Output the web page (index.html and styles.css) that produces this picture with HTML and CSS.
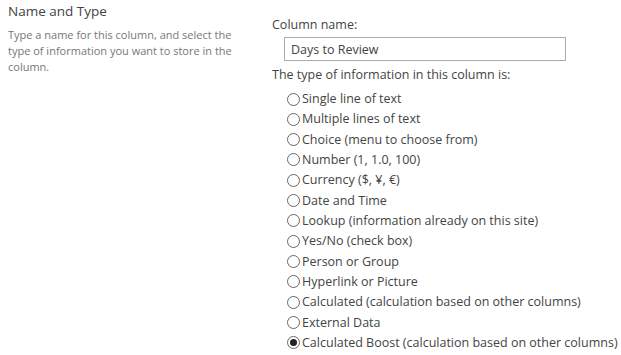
FILE: index.html
```html
<!DOCTYPE html>
<html lang="en">
<head>
  <meta charset="UTF-8" />
  <title>Name and Type</title>
  <link rel="stylesheet" href="styles.css">
</head>
<body>

  <div class="section">
    <div class="section-info">
      <h3 class="section-title">Name and Type</h3>
      <p class="section-desc">Type a name for this column, and select the type of information you want to store in the column.</p>
    </div>

    <div class="section-body">
      <label class="field-label" for="col-name">Column name:</label>
      <input id="col-name" class="text-input" type="text" value="Days to Review">

      <div class="field-label">The type of information in this column is:</div>
      <ul class="type-list">
        <li><label><input type="radio" name="type"><span class="radio"></span>Single line of text</label></li>
        <li><label><input type="radio" name="type"><span class="radio"></span>Multiple lines of text</label></li>
        <li><label><input type="radio" name="type"><span class="radio"></span>Choice (menu to choose from)</label></li>
        <li><label><input type="radio" name="type"><span class="radio"></span>Number (1, 1.0, 100)</label></li>
        <li><label><input type="radio" name="type"><span class="radio"></span>Currency ($, ¥, €)</label></li>
        <li><label><input type="radio" name="type"><span class="radio"></span>Date and Time</label></li>
        <li><label><input type="radio" name="type"><span class="radio"></span>Lookup (information already on this site)</label></li>
        <li><label><input type="radio" name="type"><span class="radio"></span>Yes/No (check box)</label></li>
        <li><label><input type="radio" name="type"><span class="radio"></span>Person or Group</label></li>
        <li><label><input type="radio" name="type"><span class="radio"></span>Hyperlink or Picture</label></li>
        <li><label><input type="radio" name="type"><span class="radio"></span>Calculated (calculation based on other columns)</label></li>
        <li><label><input type="radio" name="type"><span class="radio"></span>External Data</label></li>
        <li><label><input type="radio" name="type" checked><span class="radio"></span>Calculated Boost (calculation based on other columns)</label></li>
      </ul>
    </div>
  </div>

</body>
</html>
```

FILE: styles.css
```css
body {
  margin: 0;
  background: #fff;
  font-family: "Open Sans", "Noto Sans", sans-serif;
  color: #444;
}
.section {
  display: flex;
}
.section-info {
  width: 240px;
  padding: 2px 0 0 8px;
}
.section-title {
  margin: 0;
  font-size: 13.5px; font-weight: normal; line-height: 18px;
  color: #444;
}
.section-desc {
  margin: 7px 0 0;
  font-size: 11px; line-height: 16px;
  color: #777;
}
.section-body {
  margin-left: 24px;
  padding-top: 16px;
}
.field-label {
  display: block;
  font-size: 12.5px; line-height: 18px;
  color: #444;
}
.text-input {
  display: block;
  margin: 3px 0 5px 12px;
  width: 282px; height: 24px;
  box-sizing: border-box;
  border: 1px solid #ababab;
  padding: 0 6px;
  font-family: inherit; font-size: 12.5px;
  color: #444;
}
.type-list {
  list-style: none;
  margin: 5px 0 0 15px; padding: 0;
}
.type-list li {
  height: 20.33px; line-height: 20px;
  font-size: 12.5px;
}
.type-list label {
  display: flex; align-items: center;
}
.type-list input {
  display: none;
}
.radio {
  width: 11px; height: 11px;
  border: 1px solid #666; border-radius: 50%;
  margin-right: 2px;
  display: flex; align-items: center; justify-content: center;
}
.type-list input:checked + .radio::after {
  content: "";
  width: 7px; height: 7px;
  border-radius: 50%;
  background: #222;
}
```
